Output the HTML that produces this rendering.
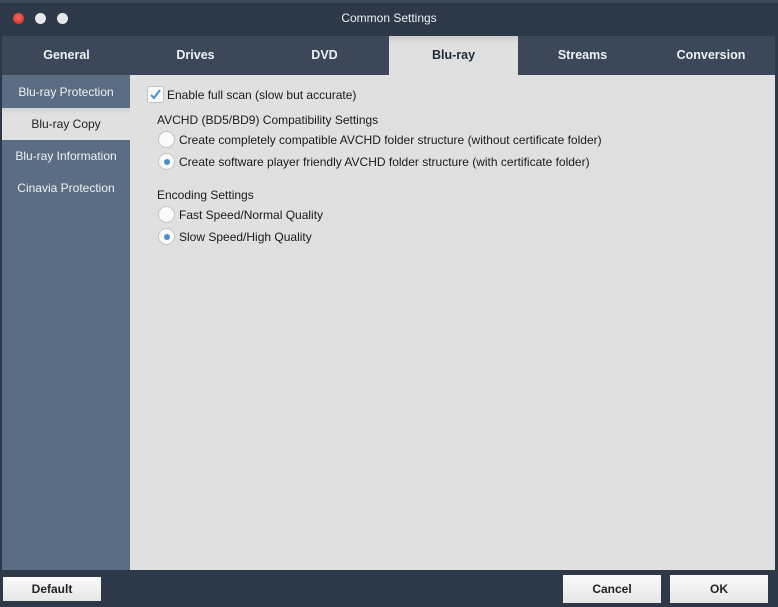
<!DOCTYPE html><html><head><style>
body{margin:0;width:778px;height:607px;background:#2d3848;font-family:"Liberation Sans",sans-serif;position:relative;overflow:hidden}
.a{position:absolute}
.dot{position:absolute;top:13px;width:11px;height:11px;border-radius:50%;background:#e8e8e8}
.tab{position:absolute;top:36px;height:39px;line-height:39px;text-align:center;color:#eef0f3;font-weight:bold;font-size:12.5px}
.side{position:absolute;left:2px;width:128px;height:32px;line-height:32px;text-align:center;color:#f0f2f5;font-size:12px}
.t{position:absolute;font-size:12px;color:#1a1a1a}
.rad{position:absolute;width:17px;height:17px;border-radius:50%;background:#fafafa;border:1px solid #c4c4c4;box-sizing:border-box}
.rad.on::after{content:"";position:absolute;left:5px;top:5px;width:6px;height:6px;border-radius:50%;background:#4a8fd0}
.btn{position:absolute;background:linear-gradient(#fafafa,#e6e6e6);color:#222;font-weight:bold;font-size:12px;text-align:center}
</style></head><body>
<div class="a" style="left:0;top:0;width:778px;height:3px;background:#3e4a5a"></div>
<div class="dot" style="left:13px;background:radial-gradient(circle at 50% 40%,#ff6a5e,#c8231a)"></div>
<div class="dot" style="left:35px"></div><div class="dot" style="left:57px"></div>
<div class="a" style="left:0;top:11px;width:778px;text-align:center;color:#eef0f3;font-size:12px">Common Settings</div>
<div class="a" style="left:2px;top:36px;width:773px;height:39px;background:#3c4859"></div>
<div class="tab" style="left:2px;width:129px">General</div>
<div class="tab" style="left:131px;width:129px">Drives</div>
<div class="tab" style="left:260px;width:129px">DVD</div>
<div class="tab" style="left:389px;width:129px;background:linear-gradient(#cfcdcb,#e0e0e0 8px);color:#1e2a38">Blu-ray</div>
<div class="tab" style="left:518px;width:129px">Streams</div>
<div class="tab" style="left:647px;width:128px">Conversion</div>
<div class="a" style="left:2px;top:75px;width:128px;height:495px;background:#5a6d82"></div>
<div class="a" style="left:130px;top:75px;width:645px;height:495px;background:#e0e0e0"></div>
<div class="side" style="top:76px">Blu-ray Protection</div>
<div class="side" style="top:108px;background:linear-gradient(#d0d0d0,#e0e0e0 6px);color:#222">Blu-ray Copy</div>
<div class="side" style="top:140px">Blu-ray Information</div>
<div class="side" style="top:172px">Cinavia Protection</div>
<div class="a" style="left:147px;top:86px;width:17px;height:17px;background:#fafafa;border:1px solid #c4c4c4;box-sizing:border-box;border-radius:2px"><svg width="15" height="15" style="position:absolute;left:0;top:0"><path d="M3 8 L6 11 L12 3" stroke="#4a8fd0" stroke-width="2" fill="none"/></svg></div>
<div class="t" style="left:167px;top:88px">Enable full scan (slow but accurate)</div>
<div class="t" style="left:157px;top:113px">AVCHD (BD5/BD9) Compatibility Settings</div>
<div class="rad" style="left:158px;top:131px"></div><div class="t" style="left:179px;top:133px">Create completely compatible AVCHD folder structure (without certificate folder)</div>
<div class="rad on" style="left:158px;top:153px"></div><div class="t" style="left:179px;top:155px">Create software player friendly AVCHD folder structure (with certificate folder)</div>
<div class="t" style="left:157px;top:188px">Encoding Settings</div>
<div class="rad" style="left:158px;top:206px"></div><div class="t" style="left:179px;top:208px">Fast Speed/Normal Quality</div>
<div class="rad on" style="left:158px;top:228px"></div><div class="t" style="left:179px;top:230px">Slow Speed/High Quality</div>
<div class="btn" style="left:3px;top:577px;width:98px;height:24px;line-height:24px">Default</div>
<div class="btn" style="left:563px;top:575px;width:98px;height:28px;line-height:28px">Cancel</div>
<div class="btn" style="left:670px;top:575px;width:98px;height:28px;line-height:28px">OK</div>
</body></html>
